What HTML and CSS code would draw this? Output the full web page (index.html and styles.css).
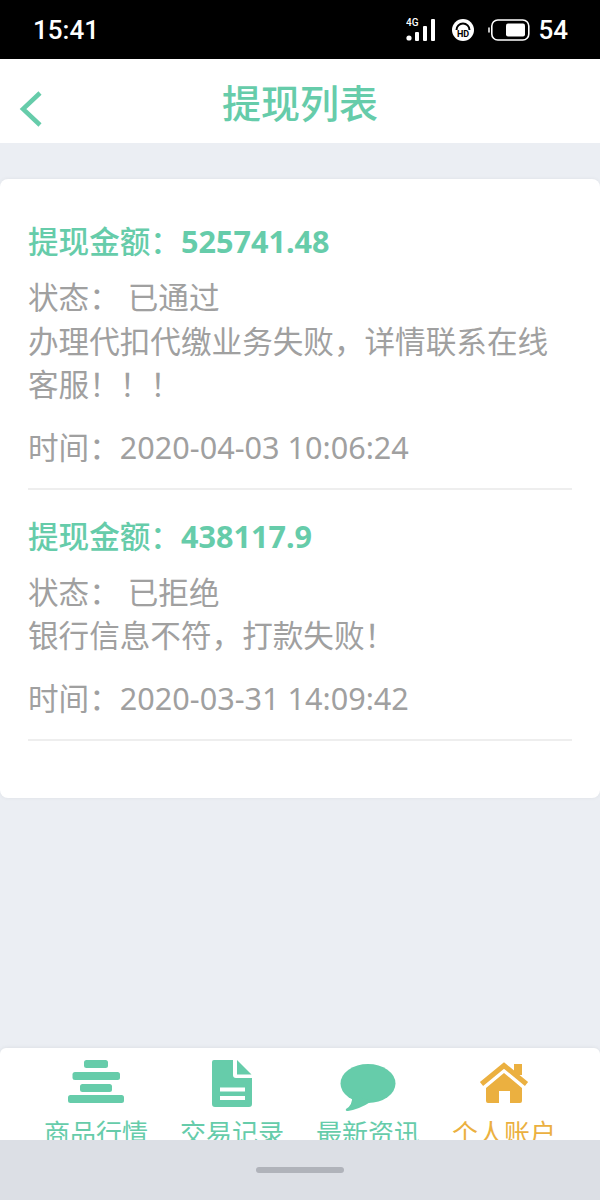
FILE: index.html
```html
<!DOCTYPE html>
<html lang="zh-CN">

<head>
    <meta charset="UTF-8">
    <meta name="viewport" content="width=device-width, initial-scale=1.0">
    <title>提现列表</title>
    <link rel="stylesheet" href="styles.css">
</head>

<body>
    <div class="status-bar">
        <span class="clock">15:41</span>
        <div class="status-icons">
            <svg class="signal" width="32" height="26" viewBox="0 0 32 26">
                <text x="0" y="9" class="signal-label">4G</text>
                <circle cx="3" cy="21" r="2.6" fill="#fff"/>
                <rect x="9" y="15" width="4" height="9" rx="1" fill="#fff"/>
                <rect x="17" y="9" width="4" height="15" rx="1" fill="#fff"/>
                <rect x="25" y="2" width="4" height="22" rx="1" fill="#fff"/>
            </svg>
            <svg class="hd" width="24" height="24" viewBox="0 0 24 24">
                <circle cx="12" cy="12" r="11" fill="#fff"/>
                <path d="M5.5 12a6.5 6.5 0 0 1 13 0" fill="none" stroke="#000" stroke-width="2"/>
                <text x="12" y="18.5" text-anchor="middle" class="hd-label">HD</text>
            </svg>
            <svg class="battery" width="42" height="22" viewBox="0 0 42 22">
                <path d="M1 9v4" stroke="#fff" stroke-width="1.5" stroke-linecap="round"/>
                <rect x="3.8" y="1" width="37" height="20" rx="6" fill="none" stroke="#fff" stroke-width="1.6"/>
                <rect x="18" y="4.5" width="19" height="13" rx="2" fill="#fff"/>
            </svg>
            <span class="battery-level">54</span>
        </div>
    </div>

    <div class="header">
        <svg class="back" width="26" height="38" viewBox="0 0 26 38">
            <path d="M22 3 L5 19 L22 35" fill="none" stroke="#66ccaa" stroke-width="4.5"/>
        </svg>
        <h1>提现列表</h1>
    </div>

    <div class="content">
        <div class="card">
            <div class="record">
                <p class="amount">提现金额&#xFF1A;<b>525741.48</b></p>
                <p class="detail">状态&#xFF1A;<span class="state">已通过</span><br>办理代扣代缴业务失败&#xFF0C;详情联系在线客服&#xFF01;&#xFF01;&#xFF01;</p>
                <p class="time">时间&#xFF1A;2020-04-03 10:06:24</p>
            </div>
            <div class="record">
                <p class="amount">提现金额&#xFF1A;<b>438117.9</b></p>
                <p class="detail">状态&#xFF1A;<span class="state">已拒绝</span><br>银行信息不符&#xFF0C;打款失败&#xFF01;</p>
                <p class="time">时间&#xFF1A;2020-03-31 14:09:42</p>
            </div>
        </div>
    </div>

    <div class="tabbar">
        <div class="tab">
            <svg width="56" height="56" viewBox="0 0 56 56" fill="#66ccaa">
                <rect x="16" y="1" width="24" height="8" rx="2.5"/>
                <rect x="4.5" y="13" width="47.5" height="8" rx="2.5"/>
                <rect x="12" y="25" width="32" height="8" rx="2.5"/>
                <rect x="0" y="36" width="56" height="8" rx="2.5"/>
            </svg>
            <span>商品行情</span>
        </div>
        <div class="tab">
            <svg width="56" height="56" viewBox="0 0 56 56" fill="#66ccaa">
                <path d="M10 1H29V16a3 3 0 0 0 3 3H48V45a3 3 0 0 1-3 3H11a3 3 0 0 1-3-3V3a2 2 0 0 1 2-2z"/>
                <path d="M33 1L47.5 15.5H33z"/>
                <rect x="16" y="28.5" width="25" height="4" fill="#fff"/>
                <rect x="16" y="37" width="25" height="4" fill="#fff"/>
            </svg>
            <span>交易记录</span>
        </div>
        <div class="tab">
            <svg width="56" height="56" viewBox="0 0 56 56" fill="#66ccaa">
                <ellipse cx="28" cy="24.5" rx="27.5" ry="19.5"/>
                <path d="M12 36Q13 46 6 50Q5 52 8 52Q20 50 32 42z"/>
            </svg>
            <span>最新资讯</span>
        </div>
        <div class="tab active">
            <svg width="56" height="56" viewBox="0 0 56 56" fill="#ebb040">
                <path d="M5.5 25L28 6.5L50.5 25" fill="none" stroke="#ebb040" stroke-width="5"/>
                <rect x="38" y="5" width="8" height="11"/>
                <path d="M28 14L46 29V42a2 2 0 0 1-2 2H34V32H23V44H12a2 2 0 0 1-2-2V29z"/>
            </svg>
            <span>个人账户</span>
        </div>
    </div>

    <div class="system-nav">
        <div class="home-pill"></div>
    </div>
</body>

</html>
```

FILE: styles.css
```css
html, body {
    margin: 0;
    height: 1200px;
    overflow: hidden;
}
body {
    display: flex;
    flex-direction: column;
    width: 600px;
    background-color: #ebeef3;
    font-family: 'Noto Sans', 'Noto Sans CJK SC', sans-serif;
}
p {
    margin: 0;
}
.status-bar {
    height: 59px;
    flex-shrink: 0;
    display: flex;
    align-items: center;
    justify-content: space-between;
    padding: 0 32px 0 33px;
    background-color: #000;
    color: #fff;
    font-family: 'Roboto', sans-serif;
    font-weight: 500;
    font-size: 26px;
}
.status-icons {
    display: flex;
    align-items: center;
}
.signal {
    margin-right: 13px;
}
.signal-label {
    font-size: 10px;
    fill: #fff;
}
.hd {
    margin-right: 13px;
}
.hd-label {
    font-size: 9px;
    font-weight: 700;
    fill: #000;
}
.battery {
    margin-right: 8px;
}
.header {
    height: 84px;
    flex-shrink: 0;
    display: flex;
    align-items: center;
    justify-content: center;
    position: relative;
    background-color: #fff;
}
.header h1 {
    margin: 0;
    font-size: 39px;
    font-weight: 500;
    color: #66ccaa;
}
.back {
    position: absolute;
    left: 18px;
    top: 31px;
}
.content {
    flex: 1;
    padding-top: 36px;
}
.card {
    padding: 35px 28px 57px;
    background-color: #fff;
    border-radius: 8px;
    box-shadow: 0 0 4px rgba(0, 0, 0, 0.06);
}
.record {
    padding-bottom: 19px;
    margin-bottom: 19px;
    border-bottom: 2px solid #eeeeee;
}
.record:last-child {
    margin-bottom: 0;
}
.amount {
    font-size: 30.6px;
    font-weight: 500;
    line-height: 54px;
    margin-bottom: 8px;
    color: #66ccaa;
}
.amount b {
    font-weight: 700;
}
.detail {
    font-size: 30.6px;
    line-height: 43.5px;
    color: #a0a0a0;
}
.state {
    margin-left: 8px;
}
.time {
    font-size: 30.6px;
    line-height: 43px;
    margin-top: 19px;
    color: #a0a0a0;
}
.tabbar {
    height: 92px;
    flex-shrink: 0;
    box-sizing: border-box;
    display: flex;
    justify-content: center;
    overflow: hidden;
    padding: 11px 24px 0;
    background-color: #fff;
    border-radius: 6px 6px 0 0;
    box-shadow: 0 0 4px rgba(0, 0, 0, 0.08);
}
.tab {
    width: 136px;
    display: flex;
    flex-direction: column;
    align-items: center;
    color: #66ccaa;
    font-size: 26px;
    line-height: 36px;
}
.tab svg {
    flex-shrink: 0;
}
.tab.active {
    color: #ebb040;
}
.system-nav {
    height: 60px;
    flex-shrink: 0;
    display: flex;
    align-items: center;
    justify-content: center;
    background-color: #dcdfe5;
}
.home-pill {
    width: 88px;
    height: 6px;
    border-radius: 3px;
    background-color: #b0b3ba;
}
```
